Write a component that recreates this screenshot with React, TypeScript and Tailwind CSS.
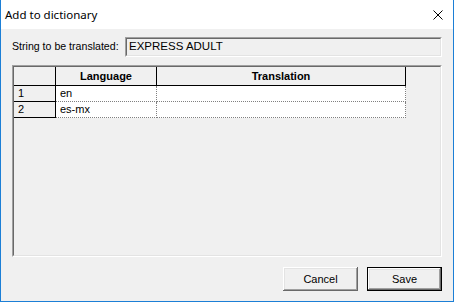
const ROWS = [
  { n: '1', lang: 'en', text: '' },
  { n: '2', lang: 'es-mx', text: '' },
]

const raised =
  'shadow-[inset_-1px_-1px_#696969,inset_1px_1px_#ffffff,inset_-2px_-2px_#a0a0a0,inset_2px_2px_#e3e3e3]'

export default function App() {
  return (
    <div className="w-[454px] h-[302px] flex flex-col bg-[#f0f0f0] border-x border-b border-[#1c7fd6] font-['Liberation_Sans',Arial,sans-serif] text-[11px] text-black">
      {/* title bar */}
      <div className="h-[29px] shrink-0 bg-white flex items-center justify-between pl-[4px] pr-[10px]">
        <span className="font-['Noto_Sans',sans-serif] text-[11.5px]">Add to dictionary</span>
        <svg width="10" height="10" viewBox="0 0 10 10" className="block">
          <path d="M0.5 0.5 L9.5 9.5 M9.5 0.5 L0.5 9.5" stroke="#000" strokeWidth="1" />
        </svg>
      </div>

      <div className="flex flex-col px-[11px] pt-[8px]">
        <div className="h-[20px] flex items-center justify-between">
          <span className="text-[10.6px]">String to be translated:</span>
          <div className="w-[317px] h-[20px] border-t border-l border-[#a0a0a0] border-r border-b border-r-white border-b-white">
            <div className="h-full border-t border-l border-[#696969] border-r border-b border-r-[#e3e3e3] border-b-[#e3e3e3] flex items-center pl-[2px] text-[11.5px]">
              EXPRESS ADULT
            </div>
          </div>
        </div>

        {/* grid */}
        <div className="mt-[8px] h-[192px] border-t border-l border-[#a0a0a0] border-r border-b border-r-white border-b-white">
          <div className="h-full border-t border-l border-[#696969] border-r border-b border-r-[#e3e3e3] border-b-[#e3e3e3] bg-[#f0f0f0]">
            <div className="flex h-[19px] font-bold">
              <div className="w-[42px] border-r border-b border-black" />
              <div className="w-[101px] border-r border-b border-black flex items-center justify-center">Language</div>
              <div className="w-[249px] border-r border-b border-black flex items-center justify-center">Translation</div>
            </div>
            {ROWS.map(r => (
              <div key={r.n} className="flex h-[16px]">
                <div className="w-[42px] border-r border-b border-black flex items-center pl-[4px]">{r.n}</div>
                <div className="w-[101px] bg-white border-r border-b border-dotted border-[#808080] flex items-center pl-[4px]">{r.lang}</div>
                <div className="w-[249px] bg-white border-r border-b border-dotted border-[#808080] flex items-center pl-[4px]">{r.text}</div>
              </div>
            ))}
          </div>
        </div>

        <div className="mt-[10px] flex justify-end gap-[9px]">
          <button className={`w-[75px] h-[24px] bg-[#f0f0f0] ${raised}`}>Cancel</button>
          <button className="w-[75px] h-[24px] border border-black bg-[#f0f0f0]">
            <div className={`w-full h-full flex items-center justify-center ${raised}`}>Save</div>
          </button>
        </div>
      </div>
    </div>
  )
}
